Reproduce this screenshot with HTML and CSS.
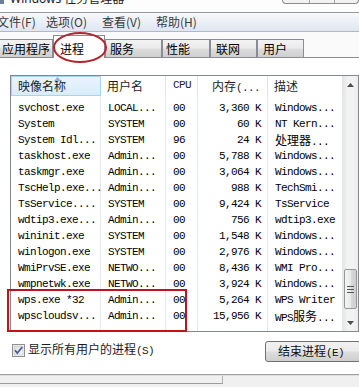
FILE: index.html
```html
<!DOCTYPE html>
<html lang="zh-CN">
<head>
<meta charset="utf-8">
<title>Windows 任务管理器</title>
<link rel="stylesheet" href="styles.css">
</head>
<body>
<div class="win">
  <div class="titlebar">
    <span class="appicon"></span>
    <span class="title">Windows 任务管理器</span>
    <div class="capbtns"><span></span><span></span><span></span></div>
  </div>
  <div class="menubar">
    <span class="mi m1">文件(F)</span>
    <span class="mi m2">选项(O)</span>
    <span class="mi m3">查看(V)</span>
    <span class="mi m4">帮助(H)</span>
  </div>
  <div class="tabs">
    <div class="tab t1">应用程序</div>
    <div class="tab sel">进程</div>
    <div class="tab t3">服务</div>
    <div class="tab t4">性能</div>
    <div class="tab t5">联网</div>
    <div class="tab t6">用户</div>
  </div>
  <div class="panel">
    <div class="list">
      <div class="lv">
        <div class="hdr">
          <div class="hc sorted">映像名称<svg class="sortarrow" width="7" height="4" viewBox="0 0 7 4"><path d="M0 4 L3.5 0 L7 4 Z" fill="#8fb3d8"/></svg></div>
          <div class="hc">用户名</div>
          <div class="hc mono">CPU</div>
          <div class="hc r">内存<span class="mono">(...</span></div>
          <div class="hc">描述</div>
        </div>
        <div class="body mono">
          <div class="row"><span>svchost.exe</span><span>LOCAL...</span><span>00</span><span class="r">3,360 K</span><span>Windows...</span></div>
          <div class="row"><span>System</span><span>SYSTEM</span><span>00</span><span class="r">60 K</span><span>NT Kern...</span></div>
          <div class="row"><span>System Idl...</span><span>SYSTEM</span><span>96</span><span class="r">24 K</span><span><b class="cj">处理器</b>...</span></div>
          <div class="row"><span>taskhost.exe</span><span>Admin...</span><span>00</span><span class="r">5,788 K</span><span>Windows...</span></div>
          <div class="row"><span>taskmgr.exe</span><span>Admin...</span><span>00</span><span class="r">3,064 K</span><span>Windows...</span></div>
          <div class="row"><span>TscHelp.exe...</span><span>Admin...</span><span>00</span><span class="r">988 K</span><span>TechSmi...</span></div>
          <div class="row"><span>TsService....</span><span>SYSTEM</span><span>00</span><span class="r">9,424 K</span><span>TsService</span></div>
          <div class="row"><span>wdtip3.exe...</span><span>Admin...</span><span>00</span><span class="r">756 K</span><span>wdtip3.exe</span></div>
          <div class="row"><span>wininit.exe</span><span>SYSTEM</span><span>00</span><span class="r">1,548 K</span><span>Windows...</span></div>
          <div class="row"><span>winlogon.exe</span><span>SYSTEM</span><span>00</span><span class="r">2,976 K</span><span>Windows...</span></div>
          <div class="row"><span>WmiPrvSE.exe</span><span>NETWO...</span><span>00</span><span class="r">8,436 K</span><span>WMI Pro...</span></div>
          <div class="row"><span>wmpnetwk.exe</span><span>NETWO...</span><span>00</span><span class="r">3,924 K</span><span>Windows...</span></div>
          <div class="row"><span>wps.exe *32</span><span>Admin...</span><span>00</span><span class="r">5,264 K</span><span>WPS Writer</span></div>
          <div class="row"><span>wpscloudsv...</span><span>Admin...</span><span>00</span><span class="r">15,956 K</span><span>WPS<b class="cj">服务</b>...</span></div>
        </div>
      </div>
      <div class="vscroll">
        <div class="sbtn"><svg width="7" height="4" viewBox="0 0 7 4"><path d="M0 4 L3.5 0 L7 4 Z" fill="#4d4d4d"/></svg></div>
        <div class="track">
          <div class="thumb"><span class="grip"></span></div>
        </div>
        <div class="sbtn"><svg width="7" height="4" viewBox="0 0 7 4"><path d="M0 0 L3.5 4 L7 0 Z" fill="#4d4d4d"/></svg></div>
      </div>
    </div>
    <div class="actions">
      <label class="chk">
        <svg class="box" width="13" height="13" viewBox="0 0 13 13">
          <defs><linearGradient id="cb" x1="0" y1="0" x2="1" y2="1"><stop offset="0" stop-color="#dcdcdc"/><stop offset="1" stop-color="#fbfbfb"/></linearGradient></defs>
          <rect x="0.5" y="0.5" width="12" height="12" fill="#fff" stroke="#8e8f8f"/>
          <rect x="2" y="2" width="9" height="9" fill="url(#cb)" stroke="#aeb3b9" stroke-width="0.6"/>
          <path d="M3 6.2 L5.3 9 L10.3 3" fill="none" stroke="#4a5f97" stroke-width="1.8"/>
        </svg>
        <span>显示所有用户的进程<span class="mono">(S)</span></span>
      </label>
      <button class="btn">结束进程<span class="mono">(E)</span></button>
    </div>
  </div>
  <div class="status"><span class="seg"></span></div>
  <div class="mark-ellipse"></div>
  <div class="mark-rect"></div>
</div>
</body>
</html>
```
FILE: styles.css
```css
* { box-sizing: border-box; }
html, body { margin: 0; padding: 0; }
body {
  width: 359px;
  height: 387px;
  overflow: hidden;
  background: #ffffff;
  font-family: "Noto Sans CJK SC", sans-serif;
  font-size: 12px;
  color: #000;
}
.win {
  position: relative;
  width: 359px;
  height: 387px;
  display: flex;
  flex-direction: column;
  background: #fafafa;
}
.mono {
  font-family: "Liberation Mono", "Noto Sans CJK SC", monospace;
  font-size: 11px;
  letter-spacing: -0.6px;
}
.cj {
  font-family: "Noto Sans CJK SC", sans-serif;
  font-weight: normal;
  font-size: 12px;
  letter-spacing: 0;
}

/* title bar */
.titlebar {
  height: 13px;
  border-bottom: 1px solid #9a9a9a;
  display: flex;
  align-items: flex-start;
  overflow: hidden;
  background: #fdfdfd;
}
.appicon {
  width: 4px;
  height: 4px;
  background: #6d7f95;
  margin-top: 0;
}
.title {
  margin-left: 6px;
  margin-top: -8px;
  line-height: 14px;
  font-family: "Noto Sans", "Noto Sans CJK SC", sans-serif;
  font-size: 12px;
  color: #222;
}
.capbtns {
  margin-left: auto;
  width: 77px;
  height: 4px;
  border: 1px solid #8d8d8d;
  border-top: none;
  border-radius: 0 0 4px 4px;
  display: flex;
  background: #f2f2f2;
}
.capbtns span { border-right: 1px solid #a5a5a5; }
.capbtns span:nth-child(1) { width: 27px; }
.capbtns span:nth-child(2) { width: 25px; }
.capbtns span:nth-child(3) { flex: 1; border-right: none; }

/* menu bar */
.menubar {
  height: 19px;
  border-bottom: 1px solid #b3b9c4;
  background: linear-gradient(#f7f8fb, #dfe6f2);
  display: flex;
  line-height: 18px;
  color: #3a3a3a;
}
.mi { white-space: nowrap; }
.m1 { margin-left: -3px; width: 49px; }
.m2 { width: 56px; }
.m3 { width: 54px; }
.m4 { width: 60px; }

/* tabs */
.tabs {
  margin-top: 3px;
  height: 23px;
  margin-left: -1px;
  border-bottom: 1px solid #898c95;
  display: flex;
  align-items: flex-end;
}
.tab {
  height: 18px;
  border: 1px solid #898c95;
  border-bottom: none;
  background: linear-gradient(#f3f3f3, #ebebeb 45%, #dcdcdc 55%, #cfcfcf);
  line-height: 17px;
  padding-left: 4px;
  white-space: nowrap;
}
.tab.t1 { width: 54px; padding-left: 2px; }
.tab.sel {
  width: 52px;
  height: 23px;
  margin-bottom: -1px;
  padding-left: 6px;
  padding-top: 4px;
  background: #ffffff;
  position: relative;
  z-index: 1;
}
.tab.t3 { width: 57px; }
.tab.t4 { width: 48px; padding-left: 3px; }
.tab.t5 { width: 47px; padding-left: 5px; }
.tab.t6 { width: 47px; padding-left: 5px; }

/* panel */
.panel {
  flex: 1;
  background: #ffffff;
  padding: 17px 0 0 10px;
  border-bottom: 1px solid #a0a0a0;
}
.list {
  width: 349px;
  height: 257px;
  border: 1px solid #828790;
  display: flex;
  background: #fff;
}
.lv { width: 332px; }
.hdr {
  height: 20px;
  display: grid;
  grid-template-columns: 90px 65px 32px 70px 75px;
  line-height: 19px;
}
.hc {
  padding: 0 7px 0 6px;
  border-right: 1px solid #e3e4e6;
  white-space: nowrap;
  overflow: hidden;
  color: #1e1e1e;
}
.hc.mono { padding-left: 7px; }
.hc.r { text-align: right; }
.hc.sorted {
  position: relative;
  background: linear-gradient(#e9f4fd, #d9ecfb);
  border: 1px solid #a9d3f3;
  line-height: 17px;
}
.sortarrow {
  position: absolute;
  left: 42px;
  top: 0;
}
.body {
  height: 235px;
  padding-top: 4px;
  background-image:
    linear-gradient(to right, transparent 89px, #e4e9f1 89px, #e4e9f1 90px, transparent 90px),
    linear-gradient(to right, transparent 154px, #e4e9f1 154px, #e4e9f1 155px, transparent 155px),
    linear-gradient(to right, transparent 186px, #e4e9f1 186px, #e4e9f1 187px, transparent 187px),
    linear-gradient(to right, transparent 256px, #e4e9f1 256px, #e4e9f1 257px, transparent 257px),
    linear-gradient(to right, transparent 331px, #e4e9f1 331px, #e4e9f1 332px, transparent 332px);
}
.row {
  height: 16px;
  line-height: 16px;
  display: grid;
  grid-template-columns: 90px 65px 32px 70px 75px;
  white-space: nowrap;
}
.row span { padding: 0 7px; overflow: hidden; }
.row span.r { text-align: right; }

/* scrollbar */
.vscroll {
  width: 15px;
  display: flex;
  flex-direction: column;
  background: linear-gradient(to right, #e6e6e6, #f2f2f2 30%, #f2f2f2 70%, #ebebeb);
}
.sbtn {
  height: 17px;
  display: flex;
  align-items: center;
  justify-content: center;
}
.track {
  flex: 1;
  display: flex;
  flex-direction: column;
  justify-content: flex-end;
  padding: 0 1px 5px 1px;
}
.thumb {
  height: 40px;
  border: 1px solid #979797;
  border-radius: 2px;
  background: linear-gradient(to right, #f4f4f4, #e9e9e9 50%, #d8d8d8 51%, #cfcfcf);
  display: flex;
  align-items: center;
  justify-content: center;
}
.grip {
  width: 7px;
  height: 7px;
  border-top: 1px solid #555;
  border-bottom: 1px solid #555;
  background: linear-gradient(transparent 2px, #555 2px, #555 3px, transparent 3px);
}

/* actions */
.actions {
  margin-top: 9px;
  display: flex;
  align-items: flex-start;
  justify-content: space-between;
  padding-left: 2px;
}
.chk {
  display: flex;
  align-items: center;
  gap: 3px;
  margin-top: 1px;
  line-height: 13px;
  color: #1b1b1b;
}
.chk .box { flex: none; }
.btn {
  width: 96px;
  height: 21px;
  margin-right: -2px;
  border: 1px solid #707070;
  border-radius: 3px;
  background: linear-gradient(#f2f2f2, #ebebeb 48%, #dddddd 52%, #cfcfcf);
  font-family: "Noto Sans CJK SC", sans-serif;
  font-size: 12px;
  color: #111;
  padding: 0 0 0 12px;
  text-align: left;
  line-height: 18px;
}

/* status bar */
.status {
  height: 12px;
  background: #f0f0f0;
  border-top: 1px solid #dcdcdc;
  position: relative;
}
.status .seg {
  display: block;
  width: 223px;
  height: 8px;
  border-right: 1px solid #b0b0b0;
  border-bottom: 1px solid #9c9c9c;
}

/* annotations */
.mark-ellipse {
  position: absolute;
  left: 53px;
  top: 32px;
  width: 54px;
  height: 31px;
  border: 2px solid #b2252b;
  border-radius: 50%;
  z-index: 5;
}
.mark-rect {
  position: absolute;
  left: 7px;
  top: 289px;
  width: 180px;
  height: 43px;
  border: 2px solid #c0141b;
  z-index: 5;
}
```
